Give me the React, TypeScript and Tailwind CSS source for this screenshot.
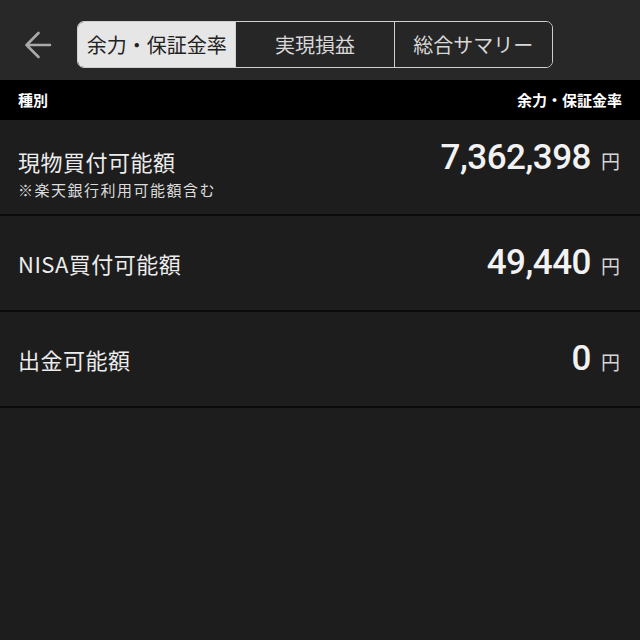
const rows = [
  { label: "現物買付可能額", note: "※楽天銀行利用可能額含む", value: "7,362,398" },
  { label: "NISA買付可能額", value: "49,440" },
  { label: "出金可能額", value: "0" },
];

const tabs = ["余力・保証金率", "実現損益", "総合サマリー"];

const jp = "font-['Noto_Sans_CJK_JP',sans-serif]";

export default function App() {
  return (
    <div className={`w-[640px] h-[640px] bg-[#1d1d1d] overflow-hidden ${jp}`}>
      {/* top bar */}
      <div className="h-[80px] pt-[9px] bg-[#282828] flex items-center">
        <div className="w-[77px] flex justify-center pr-[2px]">
          <svg width="30" height="30" viewBox="0 0 30 30" fill="none" stroke="#a9a9a9" strokeWidth="2.6" strokeLinecap="round" strokeLinejoin="round">
            <path d="M27 15H3.5M15.5 3L3.5 15L15.5 27" />
          </svg>
        </div>
        <div className="flex h-[47px] w-[476px] rounded-[7px] border-[1.5px] border-[#cfcfcf] overflow-hidden">
          {tabs.map((t, i) => (
            <div
              key={t}
              className={`flex-1 flex items-center justify-center text-[20px] ${
                i === 0 ? "bg-[#e6e6e6] text-[#222]" : "bg-[#262626] text-[#d8d8d8] border-l-[1.5px] border-[#cfcfcf]"
              }`}
            >
              {t}
            </div>
          ))}
        </div>
      </div>

      {/* header */}
      <div className="h-[40px] bg-black flex items-center justify-between px-[18px] text-[15px] font-bold text-white">
        <span>種別</span>
        <span>余力・保証金率</span>
      </div>

      {rows.map((r) => (
        <div key={r.label} className="h-[96px] border-b-2 border-[#0b0b0b] flex items-center justify-between pl-[18px] pr-[20px]">
          <div className="flex flex-col">
            <span className="text-[22px] text-[#ececec] tracking-[0.5px] leading-[30px]">{r.label}</span>
            {r.note && <span className="text-[15px] text-[#dcdcdc] tracking-[1.5px] leading-[22px] mt-[3px] mb-[-12px]">{r.note}</span>}
          </div>
          <div className={`flex items-baseline gap-[10px] ${r.note ? "mb-[18px]" : ""}`}>
            <span className="font-['Roboto',sans-serif] font-medium text-[35px] leading-[40px] text-[#f2f2f2] tracking-[-0.5px]">
              {r.value}
            </span>
            <span className="text-[19px] text-[#d6d6d6]">円</span>
          </div>
        </div>
      ))}
    </div>
  );
}
